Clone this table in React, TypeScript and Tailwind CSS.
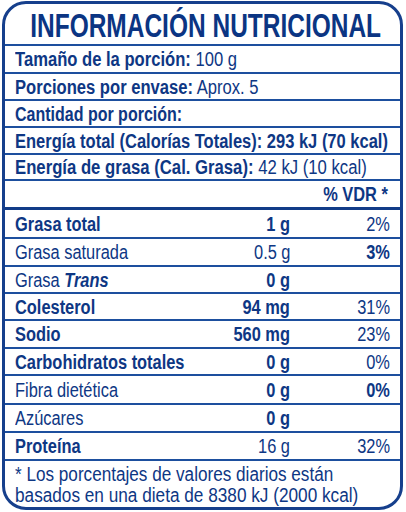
const sans = 'font-["Liberation_Sans",Arial,sans-serif]'

type Nutrient = {
  label: React.ReactNode
  amount: string
  pct?: string
  bold?: boolean
  amountBold?: boolean
  pctBold?: boolean
  h: string
}

const nutrients: Nutrient[] = [
  { label: 'Grasa total', amount: '1 g', pct: '2%', bold: true, amountBold: true, h: 'h-[30px]' },
  { label: 'Grasa saturada', amount: '0.5 g', pct: '3%', pctBold: true, h: 'h-[28px]' },
  {
    label: (
      <>
        Grasa <span className="font-bold italic">Trans</span>
      </>
    ),
    amount: '0 g',
    amountBold: true,
    h: 'h-[27px]',
  },
  { label: 'Colesterol', amount: '94 mg', pct: '31%', bold: true, amountBold: true, h: 'h-[27px]' },
  { label: 'Sodio', amount: '560 mg', pct: '23%', bold: true, amountBold: true, h: 'h-[28px]' },
  { label: 'Carbohidratos totales', amount: '0 g', pct: '0%', bold: true, amountBold: true, h: 'h-[27px]' },
  { label: 'Fibra dietética', amount: '0 g', pct: '0%', amountBold: true, pctBold: true, h: 'h-[29px]' },
  { label: 'Azúcares', amount: '0 g', amountBold: true, h: 'h-[28px]' },
  { label: 'Proteína', amount: '16 g', pct: '32%', bold: true, h: 'h-[28px]' },
]

// condensed look: the label font is a narrow grotesque, squeeze Arial metrics
const Narrow = ({ children, className = 'scale-x-[0.82]' }: { children: React.ReactNode; className?: string }) => (
  <span className={`inline-block whitespace-nowrap ${className}`}>{children}</span>
)

const InfoRow = ({ children, h }: { children: React.ReactNode; h: string }) => (
  <div className={`flex items-center whitespace-nowrap border-t-2 border-[#1d4f9e] pl-[10px] ${h}`}>
    {children}
  </div>
)

export default function App() {
  return (
    <div className="bg-white">
      <div
        className={`ml-[2px] mt-[1px] flex h-[509px] w-[401px] flex-col overflow-hidden rounded-[24px] border-[3px] border-[#163f8c] text-[20px] leading-none text-[#0e3784] ${sans}`}
      >
        <div className="flex h-[40px] items-center justify-center pl-[7px] pt-[2px] text-[34px] font-bold text-[#0b3583]">
          <span className="inline-block origin-center scale-x-[0.72] whitespace-nowrap">
            INFORMACIÓN NUTRICIONAL
          </span>
        </div>
        <InfoRow h="h-[28px]">
          <Narrow className="origin-left scale-x-[0.83]">
            <span className="font-bold">Tamaño de la porción:</span> 100 g
          </Narrow>
        </InfoRow>
        <InfoRow h="h-[27px]">
          <Narrow className="origin-left scale-x-[0.83]">
            <span className="font-bold">Porciones por envase:</span> Aprox. 5
          </Narrow>
        </InfoRow>
        <InfoRow h="h-[27px]">
          <Narrow className="origin-left scale-x-[0.8] font-bold">Cantidad por porción:</Narrow>
        </InfoRow>
        <InfoRow h="h-[27px]">
          <Narrow className="origin-left scale-x-[0.825] font-bold">
            Energía total (Calorías Totales): 293 kJ (70 kcal)
          </Narrow>
        </InfoRow>
        <InfoRow h="h-[26px]">
          <Narrow className="origin-left scale-x-[0.835]">
            <span className="font-bold">Energía de grasa (Cal. Grasa):</span> 42 kJ (10 kcal)
          </Narrow>
        </InfoRow>
        <InfoRow h="h-[28px]">
          <span className="ml-auto pr-[12px]">
            <Narrow className="origin-right scale-x-[0.82] font-bold">% VDR *</Narrow>
          </span>
        </InfoRow>
        {nutrients.map((n, i) => (
          <div
            key={i}
            className={`flex items-center whitespace-nowrap pl-[10px] pr-[10px] ${n.h} ${
              i === 0 ? 'border-t-[3px] border-[#123c88]' : 'border-t-2 border-[#1d4f9e]'
            }`}
          >
            <span className="min-w-0 flex-1">
              <Narrow className={`origin-left scale-x-[0.82] ${n.bold ? 'font-bold' : ''}`}>{n.label}</Narrow>
            </span>
            <span className="w-[110px] text-right">
              <Narrow className={`origin-right scale-x-[0.82] ${n.amountBold ? 'font-bold' : ''}`}>
                {n.amount}
              </Narrow>
            </span>
            <span className="w-[100px] text-right">
              {n.pct && (
                <Narrow className={`origin-right scale-x-[0.82] ${n.pctBold ? 'font-bold' : ''}`}>
                  {n.pct}
                </Narrow>
              )}
            </span>
          </div>
        ))}
        <div className="flex flex-1 flex-col items-start border-t-2 border-[#1d4f9e] pl-[10px] pt-[3px] leading-[21px]">
          <Narrow className="origin-left scale-x-[0.857]">* Los porcentajes de valores diarios están</Narrow>
          <Narrow className="origin-left scale-x-[0.86]">basados en una dieta de 8380 kJ (2000 kcal)</Narrow>
        </div>
      </div>
    </div>
  )
}
